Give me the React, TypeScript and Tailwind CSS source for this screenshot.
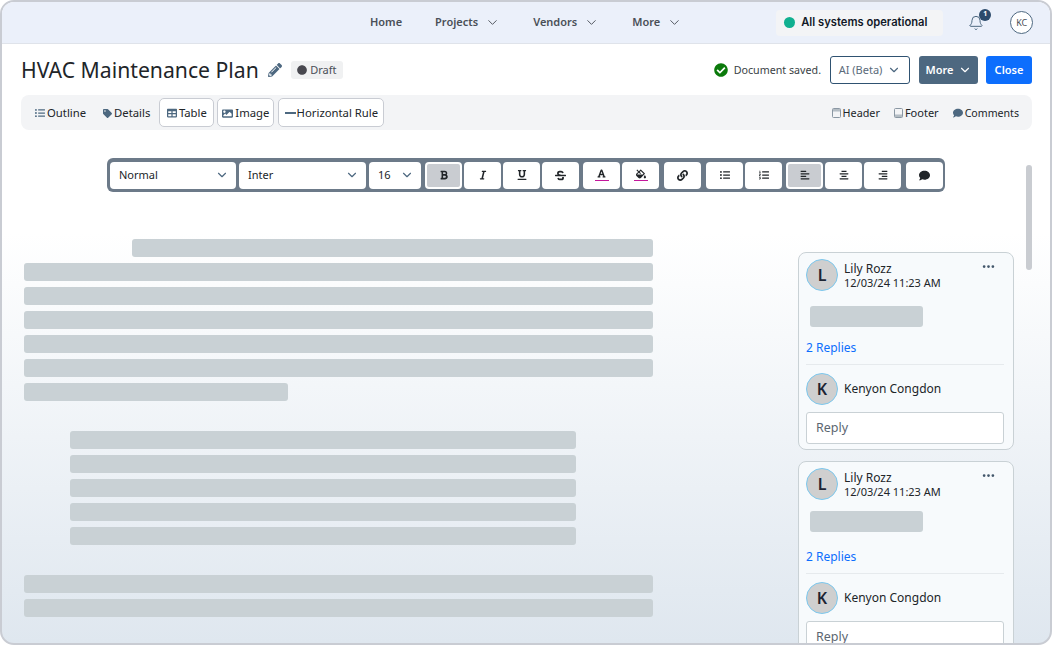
import React from "react";
import { ChevronDown, Bell, MoreHorizontal } from "lucide-react";
import {
  FaListUl, FaTag, FaTable, FaImage, FaPencilAlt, FaCircle, FaCheckCircle, FaComment, FaFont, FaFillDrip,
  FaListOl, FaAlignLeft, FaAlignCenter, FaAlignRight, FaBold, FaItalic, FaUnderline, FaStrikethrough, FaLink,
} from "react-icons/fa";

const NAV = [
  { label: "Home", cls: "ml-[368px]", menu: false },
  { label: "Projects", cls: "ml-[33px]", menu: true },
  { label: "Vendors", cls: "ml-[33px]", menu: true },
  { label: "More", cls: "ml-[33px]", menu: true },
];

function Bar({ className }: { className: string }) {
  return <div className={"h-[18px] rounded-[3px] bg-[#c9d1d5] " + className} />;
}

function Avatar({ letter }: { letter: string }) {
  return (
    <div className="flex h-[32px] w-[32px] shrink-0 items-center justify-center rounded-full border-[1.5px] border-[#7cc8ee] bg-[#cfcfcf] text-[16px] font-semibold text-[#1d2433]">
      {letter}
    </div>
  );
}

function ToolBtn({ active, children }: { active?: boolean; children: React.ReactNode }) {
  return (
    <div className="flex h-[27px] w-[37px] items-center justify-center rounded-[4px] bg-white text-[#212529]">
      {active ? (
        <div className="flex h-[23px] w-[33px] items-center justify-center rounded-[2px] bg-[#c9ccd1]">{children}</div>
      ) : (
        children
      )}
    </div>
  );
}

function Picker({ label, width }: { label: string; width: string }) {
  return (
    <div className={"flex h-[27px] items-center justify-between rounded-[4px] bg-white pl-[9px] pr-[7px] text-[11px] text-[#212529] " + width}>
      <span>{label}</span>
      <ChevronDown size={14} strokeWidth={2} className="text-[#4d6880]" />
    </div>
  );
}

// small page glyph with a band along the top or the bottom
function PageBand({ bottom }: { bottom?: boolean }) {
  return (
    <svg width="9" height="10" viewBox="0 0 9 10" className="text-[#8a97a3]">
      <rect x="0.5" y="0.5" width="8" height="9" rx="1" fill="none" stroke="currentColor" />
      <rect x="1" y={bottom ? 6.5 : 1} width="7" height="2.5" fill="currentColor" opacity="0.6" />
    </svg>
  );
}

function CommentCard({ gap }: { gap: string }) {
  return (
    <div className="mb-[11px] w-[216px] shrink-0 rounded-[8px] border border-[#c9d1d5] bg-[#f7fafc] px-[7px] pt-[6px] pb-[5px]">
      <div className="flex items-start">
        <Avatar letter="L" />
        <div className="mt-[2px] ml-[6px] flex-1">
          <div className="text-[12px] leading-[15px] text-[#212529]">Lily Rozz</div>
          <div className="text-[11px] leading-[14px] text-[#212529]">12/03/24 11:23 AM</div>
        </div>
        <MoreHorizontal size={15} strokeWidth={2.4} className="mr-[10px] text-[#3f5468]" />
      </div>
      <div className={"ml-[4px] h-[21px] w-[113px] rounded-[3px] bg-[#c9d1d5] " + gap} />
      <div className="text-[12px] leading-[16px] text-[#0d6efd]">2 Replies</div>
      <div className="mt-[8px] mr-[2px] border-t border-[#e6eaed]" />
      <div className="mt-[8px] flex items-center">
        <Avatar letter="K" />
        <span className="ml-[6px] text-[12px] text-[#212529]">Kenyon Congdon</span>
      </div>
      <div className="mt-[7px] mr-[2px] flex h-[32px] items-center rounded-[3px] border border-[#c9d1d5] bg-white pl-[9px] text-[12.5px] text-[#5c6670]">
        Reply
      </div>
    </div>
  );
}

export default function App() {
  return (
    <div className="relative h-[645px] w-[1052px] overflow-hidden rounded-[14px] border-2 border-[#c9ccd3] bg-linear-to-b from-white from-[36%] to-[#dfe7ef] font-['Noto_Sans',sans-serif] text-[#212529]">
      {/* Top nav */}
      <div className="flex h-[42px] items-center border-b border-[#dfe3ea] bg-[#ebf0fa]">
        {NAV.map((n) => (
          <div key={n.label} className={"flex items-center text-[11px] font-semibold text-[#4a4f57] " + n.cls}>
            {n.label}
            {n.menu && <ChevronDown size={15} strokeWidth={1.5} className="ml-[7px]" />}
          </div>
        ))}
        <div className="ml-[94px] flex h-[26px] w-[167px] items-center rounded-[4px] bg-[#f3f4f6] pl-[8px] font-['Inter',sans-serif] text-[11.2px] font-semibold text-[#111827]">
          <span className="mr-[6px] h-[11px] w-[11px] rounded-full bg-[#10b090]" />
          All systems operational
        </div>
        <div className="relative ml-[25px]">
          <Bell size={16} strokeWidth={1.5} className="text-[#4d6880]" />
          <span className="absolute -top-[6px] left-[11px] flex h-[12px] w-[12px] items-center justify-center rounded-full bg-[#2b4a6b] text-[7px] font-bold text-white">
            1
          </span>
        </div>
        <div className="ml-[26px] flex h-[23px] w-[23px] items-center justify-center rounded-full border border-[#4d6880] bg-white text-[9px] text-[#4a4f57]">
          KC
        </div>
      </div>

      {/* Title row */}
      <div className="mt-[12px] mr-[18px] ml-[19px] flex h-[28px] items-center">
        <span className="text-[21.2px] leading-none text-[#212529]">HVAC Maintenance Plan</span>
        <FaPencilAlt size={14} className="ml-[9px] text-[#4d6880]" />
        <span className="ml-[9px] flex h-[18px] w-[52px] items-center justify-center rounded-[3px] bg-[#f0f1f2] text-[11px] text-[#4a4f57]">
          <FaCircle size={10} className="mr-[3px] text-[#48484f]" />
          Draft
        </span>
        <FaCheckCircle size={14} className="ml-auto text-[#0b7a0b]" />
        <span className="ml-[6px] text-[10.7px] text-[#3a3f45]">Document saved.</span>
        <div className="ml-[9px] flex h-[28px] w-[80px] items-center justify-center rounded-[3px] border border-[#2f5271] bg-white text-[11px] text-[#5b6b7a]">
          AI (Beta)
          <ChevronDown size={14} strokeWidth={2} className="ml-[5px] text-[#4d6880]" />
        </div>
        <div className="ml-[9px] flex h-[28px] w-[59px] items-center justify-center rounded-[3px] bg-[#4d6880] text-[11px] font-semibold text-white">
          More
          <ChevronDown size={14} strokeWidth={2} className="ml-[4px]" />
        </div>
        <div className="ml-[8px] flex h-[28px] w-[46px] items-center justify-center rounded-[3px] bg-[#0d6efd] text-[11px] font-semibold text-white">
          Close
        </div>
      </div>

      {/* Insert toolbar */}
      <div className="mt-[11px] mr-[18px] ml-[19px] flex h-[35px] items-center rounded-[8px] bg-[#f3f4f6] pt-[1px] text-[11.3px] text-[#212529]">
        <span className="ml-[14px] flex items-center gap-[2px]"><FaListUl size={10} className="text-[#4d6880]" />Outline</span>
        <span className="ml-[17px] flex items-center gap-[2px]"><FaTag size={9} className="text-[#4d6880]" />Details</span>
        <span className="ml-[9px] -mt-[1px] flex h-[29px] w-[55px] items-center justify-center gap-[2px] rounded-[5px] border border-[#c9ccd3] bg-white pt-[1px]"><FaTable size={10} className="text-[#4d6880]" />Table</span>
        <span className="ml-[3px] -mt-[1px] flex h-[29px] w-[57px] items-center justify-center gap-[2px] rounded-[5px] border border-[#c9ccd3] bg-white pt-[1px]"><FaImage size={11} className="text-[#4d6880]" />Image</span>
        <span className="ml-[4px] -mt-[1px] flex h-[29px] w-[106px] items-center justify-center gap-[1px] rounded-[5px] border border-[#c9ccd3] bg-white pt-[1px]"><span className="h-[1.5px] w-[11px] bg-[#4d6880]" />Horizontal Rule</span>
        <span className="ml-auto flex items-center gap-[2px] text-[10.8px]"><PageBand />Header</span>
        <span className="ml-[14px] flex items-center gap-[2px] text-[11px]"><PageBand bottom />Footer</span>
        <span className="mt-[1px] mr-[13px] ml-[14px] flex items-center gap-[2px] text-[10.6px]"><FaComment size={10} className="text-[#4d6880]" />Comments</span>
      </div>

      {/* Format toolbar */}
      <div className="mt-[28px] ml-[105px] flex h-[34px] w-[838px] items-center rounded-[6px] bg-[#6c7a89] pl-[3px] text-[#212529]">
        <Picker label="Normal" width="w-[126px]" />
        <div className="ml-[3px]"><Picker label="Inter" width="w-[127px]" /></div>
        <div className="ml-[3px]"><Picker label="16" width="w-[52px]" /></div>
        <div className="ml-[4px] flex gap-[2px]">
          <ToolBtn active><FaBold size={10} /></ToolBtn>
          <ToolBtn><FaItalic size={10} /></ToolBtn>
          <ToolBtn><FaUnderline size={10} /></ToolBtn>
          <ToolBtn><FaStrikethrough size={11} /></ToolBtn>
        </div>
        <div className="ml-[4px] flex gap-[2px]">
          <ToolBtn>
            <span className="flex flex-col items-center">
              <FaFont size={9} />
              <span className="mt-[2px] h-[1.5px] w-[14px] bg-[#c4179c]" />
            </span>
          </ToolBtn>
          <ToolBtn>
            <span className="flex flex-col items-center">
              <FaFillDrip size={10} />
              <span className="mt-[1px] h-[1.5px] w-[14px] bg-[#c4179c]" />
            </span>
          </ToolBtn>
        </div>
        <div className="ml-[5px]"><ToolBtn><FaLink size={11} /></ToolBtn></div>
        <div className="ml-[5px] flex gap-[2px]">
          <ToolBtn><FaListUl size={10} /></ToolBtn>
          <ToolBtn><FaListOl size={10} /></ToolBtn>
        </div>
        <div className="ml-[4px] flex gap-[2px]">
          <ToolBtn active><FaAlignLeft size={10} /></ToolBtn>
          <ToolBtn><FaAlignCenter size={10} /></ToolBtn>
          <ToolBtn><FaAlignRight size={10} /></ToolBtn>
        </div>
        <div className="ml-[5px]"><ToolBtn><FaComment size={11} /></ToolBtn></div>
      </div>

      {/* Document + comments */}
      <div className="flex items-start">
        <div className="mt-[47px] ml-[22px] flex w-[629px] flex-col gap-[6px]">
          <Bar className="ml-[108px]" />
          <Bar className="w-full" />
          <Bar className="w-full" />
          <Bar className="w-full" />
          <Bar className="w-full" />
          <Bar className="w-full" />
          <Bar className="w-[264px]" />
          <Bar className="mt-[24px] ml-[46px] w-[506px]" />
          <Bar className="ml-[46px] w-[506px]" />
          <Bar className="ml-[46px] w-[506px]" />
          <Bar className="ml-[46px] w-[506px]" />
          <Bar className="ml-[46px] w-[506px]" />
          <Bar className="mt-[24px] w-full" />
          <Bar className="w-full" />
        </div>
        <div className="mt-[60px] ml-[145px] flex w-[216px] flex-col">
          <CommentCard gap="mt-[15px] mb-[13px]" />
          <CommentCard gap="mt-[11px] mb-[17px]" />
        </div>
      </div>

      {/* scrollbar thumb */}
      <div className="absolute top-[163px] left-[1024px] h-[105px] w-[6px] rounded-full bg-[#c9ccd1]" />
    </div>
  );
}
